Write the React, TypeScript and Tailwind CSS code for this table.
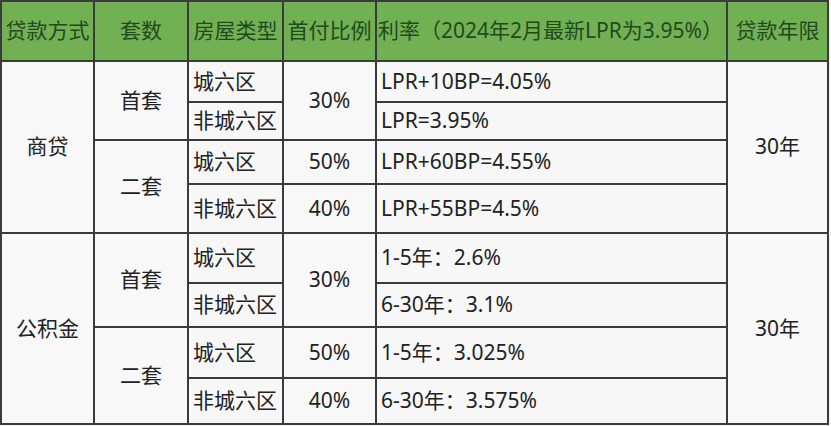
const font = { fontFamily: '"Noto Sans", "Noto Sans CJK SC", sans-serif' };

const headers = ["贷款方式", "套数", "房屋类型", "首付比例", "利率（2024年2月最新LPR为3.95%）", "贷款年限"];

const center = "bg-[#f7f8f7] flex items-center justify-center";
const left = "bg-[#f6f7f6] flex items-center pl-[4px] whitespace-nowrap";

export default function App() {
  return (
    <div className="w-[831px] h-[426px] bg-[#f4f4f4] overflow-hidden" style={font}>
      <div className="grid w-[829px] bg-[#3b3b3b] gap-[2px] p-[2px] text-[21px] text-[#222] grid-cols-[91px_92px_93px_91px_349px_99px] grid-rows-[58px_39px_36px_42px_47px_48px_42px_49px_44px]">
        {headers.map((h, i) => (
          <div
            key={h}
            className={
              i === 4
                ? "bg-[#72b054] text-[#214a1c] flex items-center pl-[1px] whitespace-nowrap"
                : "bg-[#72b054] text-[#214a1c] flex items-center justify-center whitespace-nowrap"
            }
          >
            {h}
          </div>
        ))}

        {/* 商贷 */}
        <div className={`${center} col-start-1 row-start-2 row-span-4`}>商贷</div>
        <div className={`${center} col-start-2 row-start-2 row-span-2`}>首套</div>
        <div className={`${left} col-start-3 row-start-2`}>城六区</div>
        <div className={`${center} col-start-4 row-start-2 row-span-2`}>30%</div>
        <div className={`${left} col-start-5 row-start-2`}>LPR+10BP=4.05%</div>
        <div className={`${center} col-start-6 row-start-2 row-span-4`}>30年</div>
        <div className={`${left} col-start-3 row-start-3`}>非城六区</div>
        <div className={`${left} col-start-5 row-start-3`}>LPR=3.95%</div>
        <div className={`${center} col-start-2 row-start-4 row-span-2`}>二套</div>
        <div className={`${left} col-start-3 row-start-4`}>城六区</div>
        <div className={`${center} col-start-4 row-start-4`}>50%</div>
        <div className={`${left} col-start-5 row-start-4`}>LPR+60BP=4.55%</div>
        <div className={`${left} col-start-3 row-start-5`}>非城六区</div>
        <div className={`${center} col-start-4 row-start-5`}>40%</div>
        <div className={`${left} col-start-5 row-start-5`}>LPR+55BP=4.5%</div>

        {/* 公积金 */}
        <div className={`${center} col-start-1 row-start-6 row-span-4`}>公积金</div>
        <div className={`${center} col-start-2 row-start-6 row-span-2`}>首套</div>
        <div className={`${left} col-start-3 row-start-6`}>城六区</div>
        <div className={`${center} col-start-4 row-start-6 row-span-2`}>30%</div>
        <div className={`${left} col-start-5 row-start-6`}>1-5年：2.6%</div>
        <div className={`${center} col-start-6 row-start-6 row-span-4`}>30年</div>
        <div className={`${left} col-start-3 row-start-7`}>非城六区</div>
        <div className={`${left} col-start-5 row-start-7`}>6-30年：3.1%</div>
        <div className={`${center} col-start-2 row-start-8 row-span-2`}>二套</div>
        <div className={`${left} col-start-3 row-start-8`}>城六区</div>
        <div className={`${center} col-start-4 row-start-8`}>50%</div>
        <div className={`${left} col-start-5 row-start-8`}>1-5年：3.025%</div>
        <div className={`${left} col-start-3 row-start-9`}>非城六区</div>
        <div className={`${center} col-start-4 row-start-9`}>40%</div>
        <div className={`${left} col-start-5 row-start-9`}>6-30年：3.575%</div>
      </div>
    </div>
  );
}
